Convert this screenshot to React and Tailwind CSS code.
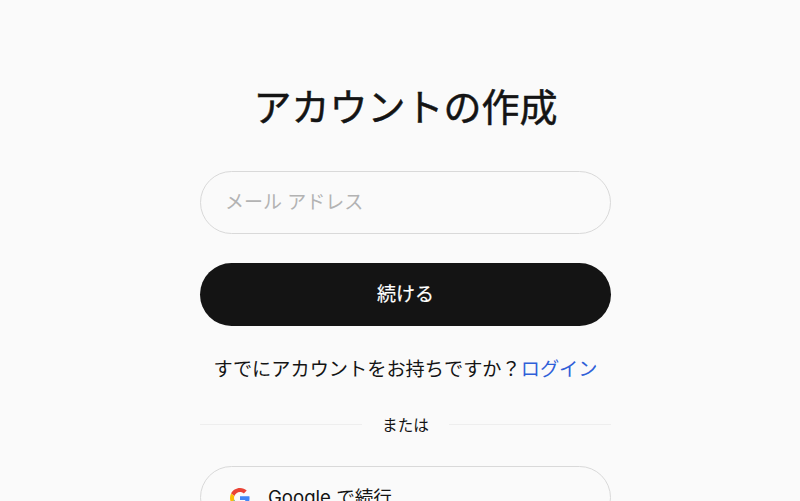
function GoogleIcon() {
  return (
    <svg width="20" height="20" viewBox="0 0 48 48">
      <path fill="#EA4335" d="M24 9.500c3.500 0 6.700 1.200 9.200 3.600l6.900-6.900C35.900 2.400 30.500 0 24 0 14.600 0 6.500 5.400 2.600 13.200l8 6.200C12.500 13.700 17.800 9.500 24 9.500z" />
      <path fill="#4285F4" d="M46.900 24.500c0-1.600-.1-3.100-.4-4.500H24v9h12.900c-.6 3-2.200 5.500-4.700 7.200l7.700 6c4.500-4.200 7-10.300 7-17.700z" />
      <path fill="#FBBC05" d="M10.500 28.600c-.5-1.400-.8-3-.8-4.600s.3-3.200.8-4.600l-8-6.200C.9 16.500 0 20.100 0 24s.9 7.500 2.600 10.800l7.900-6.200z" />
      <path fill="#34A853" d="M24 48c6.500 0 11.900-2.100 15.900-5.800l-7.700-6c-2.200 1.500-4.900 2.300-8.200 2.300-6.200 0-11.500-4.200-13.400-9.900l-8 6.200C6.500 42.600 14.600 48 24 48z" />
    </svg>
  );
}

export default function App() {
  return (
    <div className="h-[501px] overflow-hidden bg-[#fafafa] text-[#141414] font-['Inter','Noto_Sans_CJK_JP',sans-serif]">
      <div className="w-[411px] ml-[200px] pt-[81px]">
        <h1 className="text-center text-[38px] leading-[52px] [-webkit-text-stroke:0.5px_#141414]">アカウントの作成</h1>

        <div className="mt-[38px] h-[63px] rounded-full border border-[#d9d9d9] pl-[24px] pt-[2px] flex items-center text-[19px] text-[#b3b3b3]">
          メール アドレス
        </div>

        <button className="mt-[29px] h-[63px] w-full rounded-full bg-[#141414] pt-[2px] text-white text-[19px] [-webkit-text-stroke:0.2px_#ffffff]">
          続ける
        </button>

        <p className="mt-[29px] text-center text-[19.200px] leading-[28px]">
          すでにアカウントをお持ちですか？<span className="text-[#2f5fd8]">ログイン</span>
        </p>

        <div className="mt-[28px] flex items-center">
          <div className="flex-1 border-t border-[#eeeeee]"></div>
          <span className="px-[20px] pt-[4px] text-[15.600px] leading-[22px]">または</span>
          <div className="flex-1 border-t border-[#eeeeee]"></div>
        </div>

        <div className="mt-[29px] h-[63px] rounded-full border border-[#d9d9d9] pl-[29px] flex items-center gap-[18px] text-[18.600px]">
          <GoogleIcon />
          <span>Google で続行</span>
        </div>
      </div>
    </div>
  );
}
